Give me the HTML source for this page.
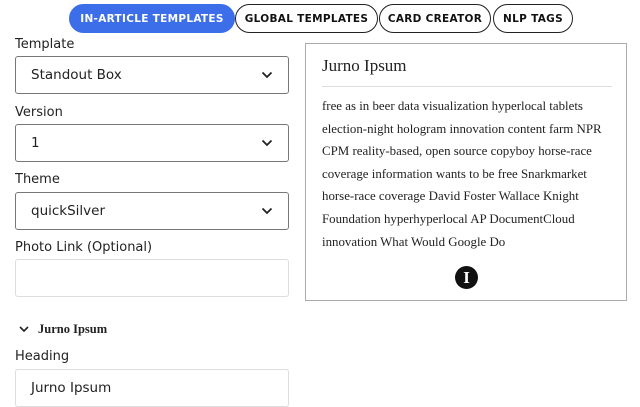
<!DOCTYPE html>
<html><head><meta charset="utf-8"><style>
*{box-sizing:border-box;margin:0;padding:0}
body{width:640px;height:400px;overflow:hidden;background:#fff;font-family:"DejaVu Sans","Liberation Sans",sans-serif;color:#222;position:relative}
.tab{position:absolute;top:4px;height:29px;border:1px solid #222;border-radius:15px;font-weight:bold;font-size:10.5px;letter-spacing:0.3px;display:flex;align-items:center;justify-content:center;color:#111;background:#fff}
.tab.a{background:#3b6ee8;border-color:#3b6ee8;color:#fff}
.lbl{position:absolute;left:15px;font-size:13px;color:#222}
.sel{position:absolute;left:15px;width:274px;height:38px;border:1px solid #777;border-radius:3px;font-size:13.5px;padding-left:15px;display:flex;align-items:center}
.sel svg{position:absolute;right:15px;top:14px}
.inp{position:absolute;left:15px;width:274px;height:38px;border:1px solid #ddd;border-radius:3px;font-size:13.5px;padding-left:15px;display:flex;align-items:center}
.box{position:absolute;left:305px;top:43px;width:322px;height:258px;border:1px solid #aaa;font-family:"Liberation Serif",serif;color:#222}
.box h2{position:absolute;left:16px;top:12px;font-weight:normal;font-size:17px}
.box hr{position:absolute;left:16px;top:42px;width:290px;border:0;border-top:1px solid #ddd}
.box p{position:absolute;left:16px;top:51px;width:292px;font-size:12.9px;line-height:22.6px;white-space:nowrap}
</style></head><body>
<div class="tab a" style="left:69px;width:166px">IN-ARTICLE TEMPLATES</div>
<div class="tab" style="left:235px;width:143px">GLOBAL TEMPLATES</div>
<div class="tab" style="left:379px;width:112px">CARD CREATOR</div>
<div class="tab" style="left:493px;width:80px">NLP TAGS</div>

<div class="lbl" style="top:37px">Template</div>
<div class="sel" style="top:56px">Standout Box<svg width="12" height="8" viewBox="0 0 12 8"><path d="M1.5 1.5L6 6 10.5 1.5" fill="none" stroke="#222" stroke-width="1.8"/></svg></div>
<div class="lbl" style="top:105px">Version</div>
<div class="sel" style="top:124px">1<svg width="12" height="8" viewBox="0 0 12 8"><path d="M1.5 1.5L6 6 10.5 1.5" fill="none" stroke="#222" stroke-width="1.8"/></svg></div>
<div class="lbl" style="top:172px">Theme</div>
<div class="sel" style="top:192px">quickSilver<svg width="12" height="8" viewBox="0 0 12 8"><path d="M1.5 1.5L6 6 10.5 1.5" fill="none" stroke="#222" stroke-width="1.8"/></svg></div>
<div class="lbl" style="top:240px">Photo Link (Optional)</div>
<div class="inp" style="top:259px"></div>
<svg style="position:absolute;left:19px;top:326px" width="10" height="7" viewBox="0 0 10 7"><path d="M1 1L5 5 9 1" fill="none" stroke="#222" stroke-width="1.6"/></svg>
<div style="position:absolute;left:38px;top:322px;font-family:'Liberation Serif',serif;font-weight:bold;font-size:12.5px">Jurno Ipsum</div>
<div class="lbl" style="top:349px">Heading</div>
<div class="inp" style="top:369px">Jurno Ipsum</div>

<div class="box">
<h2>Jurno Ipsum</h2>
<hr>
<p>free as in beer data visualization hyperlocal tablets<br>election-night hologram innovation content farm NPR<br>CPM reality-based, open source copyboy horse-race<br>coverage information wants to be free Snarkmarket<br>horse-race coverage David Foster Wallace Knight<br>Foundation hyperhyperlocal AP DocumentCloud<br>innovation What Would Google Do</p>
<div style="position:absolute;left:149px;top:222px;width:23px;height:23px;border-radius:50%;background:#111;color:#fff;font-weight:bold;font-size:17px;line-height:23px;text-align:center">I</div>
</div>
</body></html>
